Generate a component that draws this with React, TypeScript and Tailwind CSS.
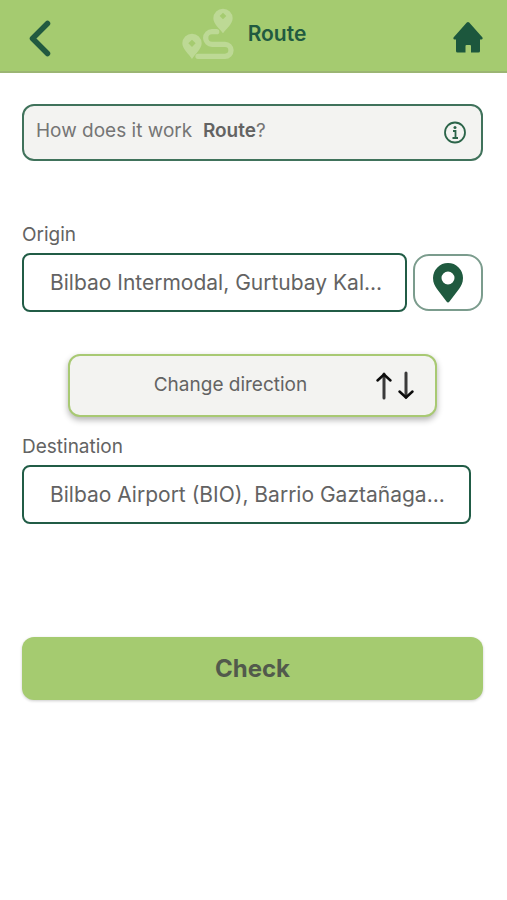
function BackIcon() {
  return (
    <svg className="h-10 w-6" viewBox="0 0 24 40" fill="none" stroke="#215a40" strokeWidth="5.500" strokeLinecap="round" strokeLinejoin="round" aria-hidden="true">
      <path d="M19.500 5.500 4.500 20.500 19.500 35.500" />
    </svg>
  );
}

function RouteIcon() {
  return (
    <svg className="size-13" viewBox="-2 -2 156 156" fill="none" aria-hidden="true">
      <g fill="#bdd995" fillRule="evenodd">
        <path d="M121 0a29 29 0 0 0-29 29c0 16 19 32 29 45 10-13 29-29 29-45A29 29 0 0 0 121 0Zm0 12 10 10-10 10-10-10Z" />
        <path d="M28 75A29 29 0 0 0-1 104c0 16 19 32 29 47 10-15 29-31 29-47A29 29 0 0 0 28 75Zm0 18 11 11-11 11-11-11Z" />
      </g>
      <path d="M102 69H88a19 19 0 0 0 0 38h39a18 18 0 0 1 0 36H46" stroke="#bdd995" strokeWidth="16" strokeLinecap="round" />
    </svg>
  );
}

function HomeIcon() {
  return (
    <svg className="size-8" viewBox="0 0 32 32" fill="#1c573d" aria-hidden="true">
      <path d="M16 0Q16.600 0 17.200 .6L30.500 15.500Q31.200 17.500 29.500 17.500H28V29Q28 30.500 26.500 30.500H19V24Q19 23 18 23H14.500Q13.500 23 13.500 24V30.500H5.500Q4 30.500 4 29V17.500H2.500Q.8 17.500 1.500 15.500L14.800 .6Q15.400 0 16 0Z" />
    </svg>
  );
}

function InfoIcon() {
  return (
    <svg className="size-6" viewBox="0 0 24 24" fill="none" stroke="#2b6449" aria-hidden="true">
      <circle cx="12" cy="11.500" r="10" strokeWidth="1.800" />
      <path d="M10 10h2.500v7M9.500 17h5.500" strokeWidth="1.800" />
      <circle cx="12" cy="6.500" r="1.500" fill="#2b6449" stroke="none" />
    </svg>
  );
}

function PinIcon() {
  return (
    <svg className="h-10 w-8" viewBox="0 0 32 40" fill="#1f5a3f" aria-hidden="true">
      <path fillRule="evenodd" d="M16 0A15 15 0 0 0 1 15c0 5 2 8 4 11l9.500 12.500q1.500 1.800 3 0L27 26c2-3 4-6 4-11A15 15 0 0 0 16 0Zm0 8.500a6.500 6.500 0 1 1 0 13 6.500 6.500 0 0 1 0-13Z" />
    </svg>
  );
}

function SwapIcon() {
  return (
    <svg className="h-8 w-10" viewBox="0 0 40 32" fill="none" strokeLinecap="round" strokeLinejoin="miter" aria-hidden="true">
      <path d="M9 4v24M31 3v24" stroke="#3a3a3a" strokeWidth="3" />
      <path d="m2.500 10.500 6.500-6 6.500 6M24.500 21.500l6.500 6 6.500-6" stroke="#0c0c0c" strokeWidth="2.500" />
    </svg>
  );
}

export default function App() {
  return (
    <div className="min-h-screen bg-white font-['Inter',sans-serif] text-[#636363]">
      <header className="grid h-[73px] grid-cols-[1fr_auto_1fr] items-center border-b-2 border-[#9bb573] bg-[#a5cb70] pr-[23px] pl-7">
        <button type="button" aria-label="Back" className="justify-self-start pt-1">
          <BackIcon />
        </button>
        <div className="flex items-center gap-3.5 pr-6 pb-1">
          <RouteIcon />
          <h1 className="text-[21px] leading-7 font-semibold text-[#215a40]">Route</h1>
        </div>
        <a href="#home" aria-label="Home" className="justify-self-end pt-1">
          <HomeIcon />
        </a>
      </header>

      <main className="pt-[31px] pr-6 pl-[22px]">
        <button type="button" className="flex h-[57px] w-full items-center justify-between rounded-xl border-2 border-[#40725b] bg-[#f3f3f1] pr-3.5 pl-3 text-left text-[19px] text-[#757575]">
          <span className="pb-0.5 whitespace-pre">
            How does it work{"  "}
            <strong className="font-semibold text-[#636363]">Route</strong>?
          </span>
          <InfoIcon />
        </button>

        <form className="mt-[62px]" onSubmit={(e) => e.preventDefault()}>
          <label htmlFor="origin" className="block text-[19px] leading-6">Origin</label>
          <div className="mt-1.5 flex items-center gap-1.5">
            <input id="origin" type="text" defaultValue="Bilbao Intermodal, Gurtubay Kal..." className="h-[59px] min-w-0 flex-1 rounded-lg border-2 border-[#215c46] bg-white pr-4 pl-[26px] text-[21px] outline-none" />
            <button type="button" aria-label="Use my location" className="flex h-[57px] w-[70px] items-center justify-center rounded-2xl border-2 border-[#7b9c8d] bg-white">
              <PinIcon />
            </button>
          </div>

          <button type="button" className="mx-auto mt-[42px] grid h-[63px] w-4/5 grid-cols-[1fr_auto_1fr] items-center rounded-xl border-2 border-[#a8c973] bg-[#f3f3f1] pr-5 text-[19px] shadow-[0_3px_6px_rgba(0,0,0,0.3)]">
            <span className="col-start-2 pr-6">Change direction</span>
            <span className="justify-self-end"><SwapIcon /></span>
          </button>

          <label htmlFor="destination" className="mt-[18px] block text-[19px] leading-6">Destination</label>
          <input id="destination" type="text" defaultValue="Bilbao Airport (BIO), Barrio Gaztañaga..." className="mt-1.5 block h-[59px] w-[calc(100%-12px)] rounded-lg border-2 border-[#215c46] bg-white pr-4 pl-[26px] text-[21px] outline-none" />

          <button type="submit" className="mt-[113px] h-[63px] w-full rounded-xl bg-[#a5cb70] text-2xl font-bold text-[#525a4c] shadow-[0_1px_3px_rgba(0,0,0,0.2)]">
            Check
          </button>
        </form>
      </main>
    </div>
  );
}
